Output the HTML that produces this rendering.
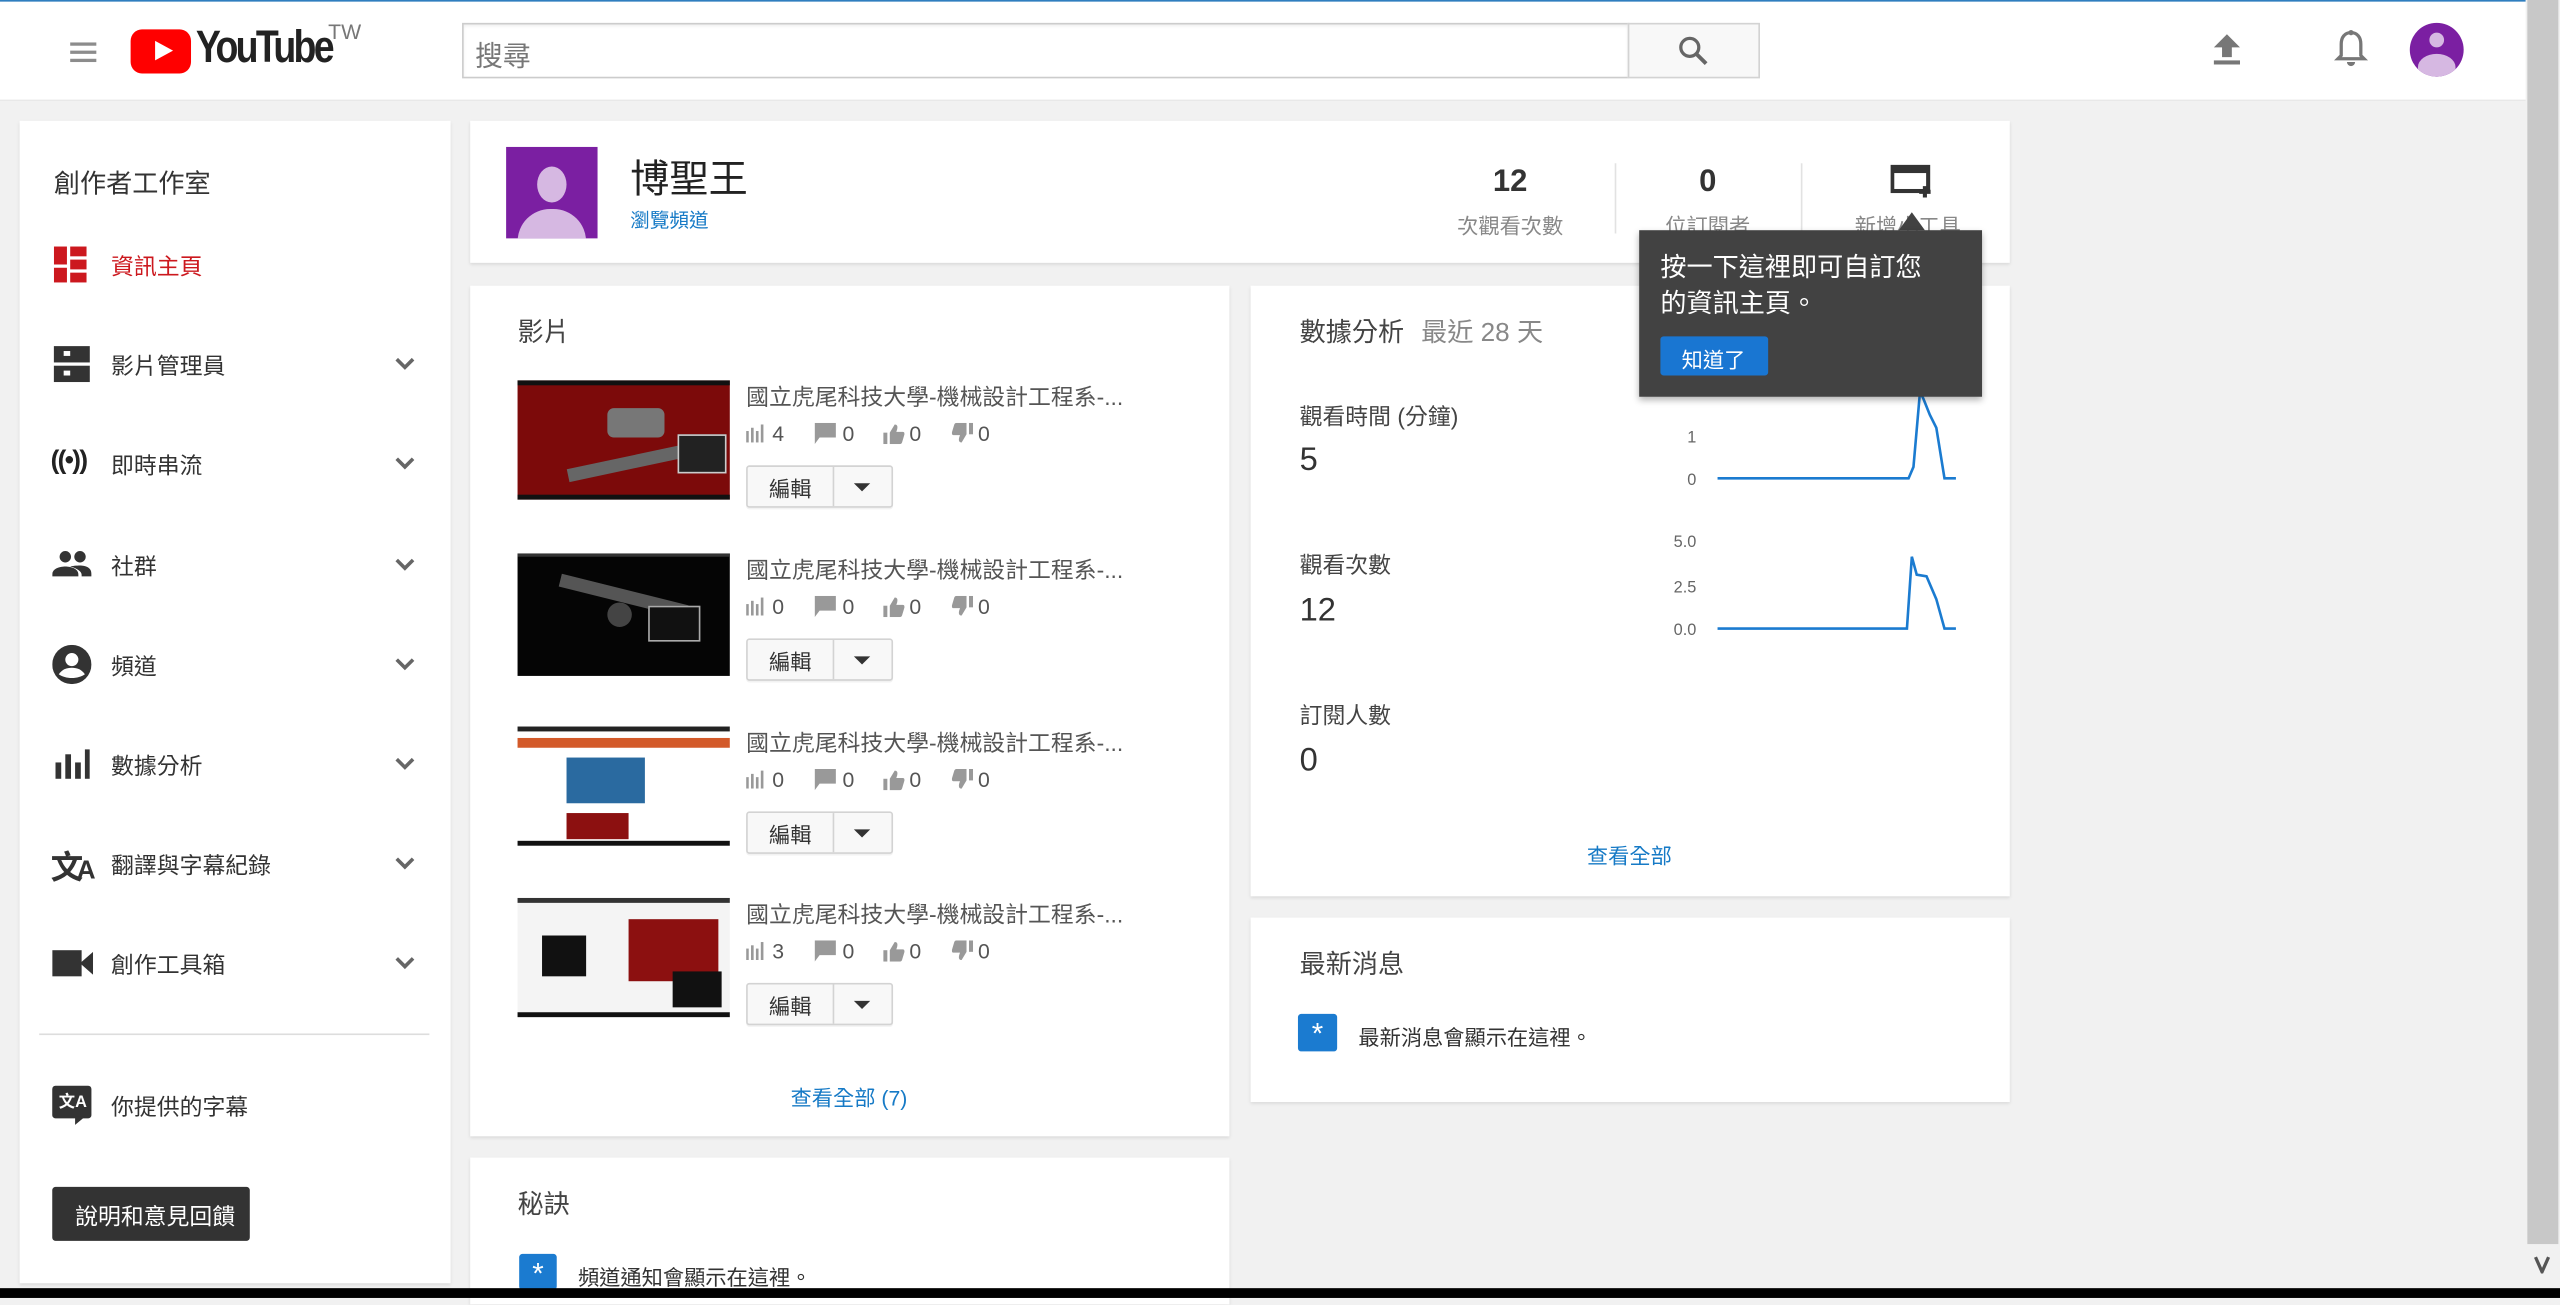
<!DOCTYPE html>
<html><head><meta charset="utf-8">
<style>
html,body{margin:0;padding:0;width:2560px;height:1297px;overflow:hidden;background:#f1f1f1}
#s{position:absolute;left:0;top:0;width:1568px;height:795px;transform:scale(1.63265);transform-origin:0 0;background:#f1f1f1;font-family:"Liberation Sans","Noto Sans CJK TC",sans-serif;color:#333}
.a{position:absolute}
.card{position:absolute;background:#fff;box-shadow:0 1px 2px rgba(0,0,0,.1)}
.t{position:absolute;white-space:nowrap}
.nav{font-size:14px;color:#333}
.chev{position:absolute;left:242px;width:12px;height:12px}
.vt{font-size:14px;color:#555}
.stats{position:absolute;left:457px;width:160px;height:16px;font-size:13px;color:#555}
.stats svg{position:absolute;top:1px}
.stats span{position:absolute;top:0}
.btn{position:absolute;width:88px;height:24px;border:1px solid #d3d3d3;border-radius:2px;background:#f8f8f8;box-shadow:0 1px 0 rgba(0,0,0,.05)}
.btn span{position:absolute;left:13px;top:3px;font-size:13px;color:#333}
.btn i{position:absolute;left:52px;top:0;width:1px;height:24px;background:#d3d3d3}
.btn b{position:absolute;left:65px;top:10px;width:0;height:0;border-left:5px solid transparent;border-right:5px solid transparent;border-top:5px solid #333}
</style></head><body><div id="s">
<!-- header -->
<div class="a" style="left:0;top:0;width:1547px;height:61px;background:#fff;border-bottom:1px solid #e8e8e8"></div>
<div class="a" style="left:0;top:0;width:1547px;height:1px;background:#2f7ebf"></div>
<div class="a" style="left:43px;top:26px;width:16px;height:2px;background:#8c8c8c;box-shadow:0 5px 0 #8c8c8c,0 10px 0 #8c8c8c"></div>
<div class="a" style="left:80px;top:18px;width:37px;height:27px;background:#f00;border-radius:7px"></div>
<div class="a" style="left:95px;top:25px;width:0;height:0;border-top:6.5px solid transparent;border-bottom:6.5px solid transparent;border-left:11px solid #fff"></div>
<div class="t" style="left:120px;top:13px;font-size:28px;font-weight:bold;letter-spacing:-2px;color:#222;transform:scaleX(.82);transform-origin:0 0">YouTube</div>
<div class="t" style="left:201px;top:12px;font-size:13px;color:#777">TW</div>
<div class="a" style="left:283px;top:14px;width:713px;height:32px;border:1px solid #ccc;background:#fff;box-shadow:inset 0 1px 2px #eee"></div>
<div class="t" style="left:291px;top:20px;font-size:17px;color:#777">搜尋</div>
<div class="a" style="left:997px;top:14px;width:79px;height:32px;border:1px solid #d3d3d3;background:#f8f8f8"></div>
<svg class="a" style="left:1027px;top:21px" width="20" height="20" viewBox="0 0 20 20"><circle cx="8" cy="8" r="5.5" fill="none" stroke="#666" stroke-width="2"/><path d="M12 12l6 6" stroke="#666" stroke-width="2.4"/></svg>
<svg class="a" style="left:1353px;top:19px" width="22" height="22" viewBox="0 0 22 22"><path d="M11 2l-8 8h5v6h6v-6h5z" fill="#777"/><rect x="3" y="18" width="16" height="2.5" fill="#777"/></svg>
<svg class="a" style="left:1428px;top:17px" width="24" height="26" viewBox="0 0 24 26"><path d="M12 3c-4 0-6 3-6 7v7l-2 2h16l-2-2v-7c0-4-2-7-6-7z" fill="none" stroke="#777" stroke-width="2"/><circle cx="12" cy="3" r="1.6" fill="#777"/><path d="M9.5 21a2.5 2.5 0 0 0 5 0z" fill="#777"/></svg>
<div class="a" style="left:1476px;top:14px;width:33px;height:33px;border-radius:50%;background:#7b1fa2;overflow:hidden"><div class="a" style="left:12px;top:6px;width:9px;height:9px;border-radius:50%;background:#d6b8e2"></div><div class="a" style="left:5px;top:19px;width:23px;height:16px;border-radius:50% 50% 0 0;background:#d6b8e2"></div></div>
<!-- scrollbar -->
<div class="a" style="left:1547px;top:0;width:21px;height:790px;background:#f1f1f1"></div>
<div class="a" style="left:1548px;top:0;width:19px;height:762px;background:#c8c8c8"></div>
<svg class="a" style="left:1551px;top:768px" width="12" height="12" viewBox="0 0 12 12"><path d="M2 2l4 9 4-9" fill="none" stroke="#555" stroke-width="2"/></svg>

<!-- sidebar -->
<div class="card" style="left:12px;top:74px;width:264px;height:712px"></div>
<div class="t" style="left:33px;top:99px;font-size:16px;color:#333">創作者工作室</div>
<svg class="a" style="left:33px;top:151px" width="22" height="22" viewBox="0 0 22 22" fill="#cc181e"><rect x="0" y="0" width="8" height="11"/><rect x="10" y="0" width="10" height="6"/><rect x="10" y="8" width="10" height="6"/><rect x="0" y="13" width="8" height="9"/><rect x="10" y="16" width="10" height="6"/></svg>
<div class="t nav" style="left:68px;top:153px;color:#cc181e">資訊主頁</div>
<svg class="a" style="left:32px;top:211px" width="24" height="24" viewBox="0 0 24 24" fill="#333"><rect x="1" y="1" width="22" height="10"/><rect x="1" y="13" width="22" height="10"/><rect x="7" y="4" width="4" height="3" fill="#fff"/><rect x="7" y="16" width="4" height="3" fill="#fff"/></svg>
<div class="t nav" style="left:68px;top:214px">影片管理員</div>
<div class="t nav" style="left:31px;top:274px;font-size:16px;font-weight:bold;letter-spacing:-1px;color:#222">((•))</div>
<div class="t nav" style="left:68px;top:275px">即時串流</div>
<svg class="a" style="left:32px;top:336px" width="24" height="20" viewBox="0 0 24 20" fill="#333"><circle cx="8" cy="5" r="3.5"/><circle cx="17" cy="5" r="3.5"/><path d="M0 16c0-4 5-5 8-5s8 1 8 5v1H0z"/><path d="M11 11c1-.3 4-.6 6-.6 3 0 7 1 7 5v1.6h-6v-1c0-2-3-4-7-5z"/></svg>
<div class="t nav" style="left:68px;top:337px">社群</div>
<svg class="a" style="left:32px;top:395px" width="24" height="24" viewBox="0 0 24 24"><circle cx="12" cy="12" r="12" fill="#333"/><circle cx="12" cy="9" r="4" fill="#fff"/><path d="M4 18c2-3 5-4 8-4s6 1 8 4c-2 1.5-5 2.3-8 2.3S6 19.5 4 18z" fill="#fff"/></svg>
<div class="t nav" style="left:68px;top:398px">頻道</div>
<svg class="a" style="left:33px;top:458px" width="22" height="20" viewBox="0 0 22 20" fill="#333"><rect x="1" y="9" width="3.5" height="10"/><rect x="7" y="4" width="3.5" height="15"/><rect x="13" y="9" width="3.5" height="10"/><rect x="19" y="1" width="3" height="18"/></svg>
<div class="t nav" style="left:68px;top:459px">數據分析</div>
<div class="t" style="left:31px;top:515px;font-size:20px;font-weight:bold;color:#333;letter-spacing:-4px">文<span style="font-size:16px">A</span></div>
<div class="t nav" style="left:68px;top:520px">翻譯與字幕紀錄</div>
<svg class="a" style="left:32px;top:581px" width="25" height="18" viewBox="0 0 25 18" fill="#333"><rect x="0" y="1" width="18" height="16"/><path d="M17 9l8-7v14z"/></svg>
<div class="t nav" style="left:68px;top:581px">創作工具箱</div>
<svg class="chev" style="top:217px" viewBox="0 0 12 12"><path d="M1 3l5 5 5-5" fill="none" stroke="#666" stroke-width="2.2"/></svg>
<svg class="chev" style="top:278px" viewBox="0 0 12 12"><path d="M1 3l5 5 5-5" fill="none" stroke="#666" stroke-width="2.2"/></svg>
<svg class="chev" style="top:340px" viewBox="0 0 12 12"><path d="M1 3l5 5 5-5" fill="none" stroke="#666" stroke-width="2.2"/></svg>
<svg class="chev" style="top:401px" viewBox="0 0 12 12"><path d="M1 3l5 5 5-5" fill="none" stroke="#666" stroke-width="2.2"/></svg>
<svg class="chev" style="top:462px" viewBox="0 0 12 12"><path d="M1 3l5 5 5-5" fill="none" stroke="#666" stroke-width="2.2"/></svg>
<svg class="chev" style="top:523px" viewBox="0 0 12 12"><path d="M1 3l5 5 5-5" fill="none" stroke="#666" stroke-width="2.2"/></svg>
<svg class="chev" style="top:584px" viewBox="0 0 12 12"><path d="M1 3l5 5 5-5" fill="none" stroke="#666" stroke-width="2.2"/></svg>
<div class="a" style="left:24px;top:633px;width:239px;height:1px;background:#ddd"></div>
<div class="a" style="left:32px;top:665px;width:24px;height:20px;background:#333;border-radius:2px"></div>
<div class="a" style="left:46px;top:684px;width:0;height:0;border-left:6px solid #333;border-bottom:5px solid transparent"></div>
<div class="t" style="left:36px;top:666px;font-size:10px;color:#fff;font-weight:bold">文A</div>
<div class="t nav" style="left:68px;top:668px">你提供的字幕</div>
<div class="a" style="left:32px;top:727px;width:121px;height:33px;background:#333;border-radius:2px"></div>
<div class="t" style="left:46px;top:735px;font-size:14px;color:#fff">說明和意見回饋</div>

<!-- channel header -->
<div class="card" style="left:288px;top:74px;width:943px;height:87px"></div>
<div class="a" style="left:310px;top:90px;width:56px;height:56px;background:#7b1fa2;overflow:hidden"><div class="a" style="left:19px;top:12px;width:18px;height:22px;border-radius:50%;background:#d6b8e2"></div><div class="a" style="left:7px;top:38px;width:42px;height:24px;border-radius:20px 20px 0 0;background:#d6b8e2"></div></div>
<div class="t" style="left:386px;top:90px;font-size:24px;color:#222">博聖王</div>
<div class="t" style="left:386px;top:126px;font-size:12px;color:#167ac6">瀏覽頻道</div>
<div class="t" style="left:890px;top:101px;width:70px;text-align:center;font-size:19px;font-weight:bold;color:#333">12</div>
<div class="t" style="left:885px;top:128px;width:80px;text-align:center;font-size:13px;color:#888">次觀看次數</div>
<div class="a" style="left:989px;top:100px;width:1px;height:43px;background:#e2e2e2"></div>
<div class="t" style="left:1016px;top:101px;width:60px;text-align:center;font-size:19px;font-weight:bold;color:#333">0</div>
<div class="t" style="left:1011px;top:128px;width:70px;text-align:center;font-size:13px;color:#888">位訂閱者</div>
<div class="a" style="left:1103px;top:100px;width:1px;height:43px;background:#e2e2e2"></div>
<svg class="a" style="left:1158px;top:101px" width="26" height="20" viewBox="0 0 26 20"><rect x="1" y="1" width="22" height="15" fill="none" stroke="#333" stroke-width="2.5"/><rect x="1" y="1" width="22" height="4" fill="#333"/><path d="M21 13v7M17.5 16.5h7" stroke="#333" stroke-width="2.5"/></svg>
<div class="t" style="left:1136px;top:128px;font-size:13px;color:#888">新增小工具</div>

<!-- videos card -->
<div class="card" style="left:288px;top:175px;width:465px;height:521px"></div>
<div class="t" style="left:317px;top:190px;font-size:16px;color:#444">影片</div>

<div class="a" style="left:317px;top:233px;width:130px;height:73px;background:#7c0a0a;border-top:3px solid #111;border-bottom:3px solid #111;box-sizing:border-box"><div class="a" style="left:55px;top:14px;width:35px;height:18px;background:#777;border-radius:4px"></div><div class="a" style="left:30px;top:42px;width:90px;height:8px;background:#666;transform:rotate(-12deg)"></div><div class="a" style="left:98px;top:30px;width:28px;height:22px;background:#222;border:1px solid #ccc"></div></div>
<div class="t vt" style="left:457px;top:233px">國立虎尾科技大學-機械設計工程系-...</div>
<div class="stats" style="top:258px"><svg style="left:0" width="11" height="12" viewBox="0 0 11 12" fill="#999"><rect x="0" y="5" width="1.6" height="7"/><rect x="3" y="3" width="1.6" height="9"/><rect x="6" y="5" width="1.6" height="7"/><rect x="9" y="1" width="1.6" height="11"/></svg><span style="left:16px">4</span><svg style="left:42px" width="13" height="14" viewBox="0 0 13 14" fill="#999"><path d="M0 0h13v9H3l-3 4z"/></svg><span style="left:59px">0</span><svg style="left:84px" width="13" height="13" viewBox="0 0 13 13" fill="#999"><rect x="0" y="6" width="2.5" height="7"/><path d="M4 6l3-5c1.5 0 2 1 1.5 3L8 5.5h4c1 0 1 1 1 1.5l-1.5 5c-.3.7-.8 1-1.5 1H4z"/></svg><span style="left:100px">0</span><svg style="left:126px" width="13" height="13" viewBox="0 0 13 13" fill="#999"><rect x="10.5" y="0" width="2.5" height="7"/><path d="M9 7l-3 5c-1.5 0-2-1-1.5-3L5 7.5H1c-1 0-1-1-1-1.5l1.5-5C1.8.3 2.3 0 3 0h6z"/></svg><span style="left:142px">0</span></div>
<div class="btn" style="left:457px;top:285px"><span>編輯</span><i></i><b></b></div>

<div class="a" style="left:317px;top:339px;width:130px;height:73px;background:#050505;border-top:2px solid #333"><div class="a" style="left:25px;top:20px;width:80px;height:8px;background:#555;transform:rotate(14deg)"></div><div class="a" style="left:55px;top:28px;width:15px;height:15px;border-radius:50%;background:#444"></div><div class="a" style="left:80px;top:30px;width:30px;height:20px;border:1px solid #aaa;background:#111"></div></div>
<div class="t vt" style="left:457px;top:339px">國立虎尾科技大學-機械設計工程系-...</div>
<div class="stats" style="top:364px"><svg style="left:0" width="11" height="12" viewBox="0 0 11 12" fill="#999"><rect x="0" y="5" width="1.6" height="7"/><rect x="3" y="3" width="1.6" height="9"/><rect x="6" y="5" width="1.6" height="7"/><rect x="9" y="1" width="1.6" height="11"/></svg><span style="left:16px">0</span><svg style="left:42px" width="13" height="14" viewBox="0 0 13 14" fill="#999"><path d="M0 0h13v9H3l-3 4z"/></svg><span style="left:59px">0</span><svg style="left:84px" width="13" height="13" viewBox="0 0 13 13" fill="#999"><rect x="0" y="6" width="2.5" height="7"/><path d="M4 6l3-5c1.5 0 2 1 1.5 3L8 5.5h4c1 0 1 1 1 1.5l-1.5 5c-.3.7-.8 1-1.5 1H4z"/></svg><span style="left:100px">0</span><svg style="left:126px" width="13" height="13" viewBox="0 0 13 13" fill="#999"><rect x="10.5" y="0" width="2.5" height="7"/><path d="M9 7l-3 5c-1.5 0-2-1-1.5-3L5 7.5H1c-1 0-1-1-1-1.5l1.5-5C1.8.3 2.3 0 3 0h6z"/></svg><span style="left:142px">0</span></div>
<div class="btn" style="left:457px;top:391px"><span>編輯</span><i></i><b></b></div>

<div class="a" style="left:317px;top:445px;width:130px;height:73px;background:#fff;border-top:3px solid #222;border-bottom:3px solid #111;box-sizing:border-box"><div class="a" style="left:0;top:4px;width:130px;height:6px;background:#d35a2a"></div><div class="a" style="left:30px;top:16px;width:48px;height:28px;background:#2a6aa0"></div><div class="a" style="left:30px;top:50px;width:38px;height:16px;background:#8c1010"></div></div>
<div class="t vt" style="left:457px;top:445px">國立虎尾科技大學-機械設計工程系-...</div>
<div class="stats" style="top:470px"><svg style="left:0" width="11" height="12" viewBox="0 0 11 12" fill="#999"><rect x="0" y="5" width="1.6" height="7"/><rect x="3" y="3" width="1.6" height="9"/><rect x="6" y="5" width="1.6" height="7"/><rect x="9" y="1" width="1.6" height="11"/></svg><span style="left:16px">0</span><svg style="left:42px" width="13" height="14" viewBox="0 0 13 14" fill="#999"><path d="M0 0h13v9H3l-3 4z"/></svg><span style="left:59px">0</span><svg style="left:84px" width="13" height="13" viewBox="0 0 13 13" fill="#999"><rect x="0" y="6" width="2.5" height="7"/><path d="M4 6l3-5c1.5 0 2 1 1.5 3L8 5.5h4c1 0 1 1 1 1.5l-1.5 5c-.3.7-.8 1-1.5 1H4z"/></svg><span style="left:100px">0</span><svg style="left:126px" width="13" height="13" viewBox="0 0 13 13" fill="#999"><rect x="10.5" y="0" width="2.5" height="7"/><path d="M9 7l-3 5c-1.5 0-2-1-1.5-3L5 7.5H1c-1 0-1-1-1-1.5l1.5-5C1.8.3 2.3 0 3 0h6z"/></svg><span style="left:142px">0</span></div>
<div class="btn" style="left:457px;top:497px"><span>編輯</span><i></i><b></b></div>

<div class="a" style="left:317px;top:550px;width:130px;height:73px;background:#f4f4f4;border-top:3px solid #333;border-bottom:3px solid #111;box-sizing:border-box"><div class="a" style="left:68px;top:10px;width:55px;height:38px;background:#8c1010"></div><div class="a" style="left:15px;top:20px;width:27px;height:25px;background:#111"></div><div class="a" style="left:95px;top:42px;width:30px;height:22px;background:#111"></div></div>
<div class="t vt" style="left:457px;top:550px">國立虎尾科技大學-機械設計工程系-...</div>
<div class="stats" style="top:575px"><svg style="left:0" width="11" height="12" viewBox="0 0 11 12" fill="#999"><rect x="0" y="5" width="1.6" height="7"/><rect x="3" y="3" width="1.6" height="9"/><rect x="6" y="5" width="1.6" height="7"/><rect x="9" y="1" width="1.6" height="11"/></svg><span style="left:16px">3</span><svg style="left:42px" width="13" height="14" viewBox="0 0 13 14" fill="#999"><path d="M0 0h13v9H3l-3 4z"/></svg><span style="left:59px">0</span><svg style="left:84px" width="13" height="13" viewBox="0 0 13 13" fill="#999"><rect x="0" y="6" width="2.5" height="7"/><path d="M4 6l3-5c1.5 0 2 1 1.5 3L8 5.5h4c1 0 1 1 1 1.5l-1.5 5c-.3.7-.8 1-1.5 1H4z"/></svg><span style="left:100px">0</span><svg style="left:126px" width="13" height="13" viewBox="0 0 13 13" fill="#999"><rect x="10.5" y="0" width="2.5" height="7"/><path d="M9 7l-3 5c-1.5 0-2-1-1.5-3L5 7.5H1c-1 0-1-1-1-1.5l1.5-5C1.8.3 2.3 0 3 0h6z"/></svg><span style="left:142px">0</span></div>
<div class="btn" style="left:457px;top:602px"><span>編輯</span><i></i><b></b></div>

<div class="t" style="left:420px;top:662px;width:200px;text-align:center;font-size:13px;color:#167ac6">查看全部 (7)</div>

<!-- tips -->
<div class="card" style="left:288px;top:709px;width:465px;height:90px"></div>
<div class="t" style="left:317px;top:724px;font-size:16px;color:#444">秘訣</div>
<div class="a" style="left:318px;top:768px;width:23px;height:22px;background:#1b7bd0;border-radius:2px;color:#fff;font-size:18px;text-align:center;line-height:24px">*</div>
<div class="t" style="left:354px;top:772px;font-size:13px;color:#333">頻道通知會顯示在這裡。</div>

<!-- analytics -->
<div class="card" style="left:766px;top:175px;width:465px;height:374px"></div>
<div class="t" style="left:796px;top:190px;font-size:16px;color:#444">數據分析 <span style="color:#888;margin-left:6px">最近 28 天</span></div>
<div class="t" style="left:796px;top:245px;font-size:14px;color:#444">觀看時間 (分鐘)</div>
<div class="t" style="left:796px;top:271px;font-size:20px;color:#333">5</div>
<div class="t" style="left:796px;top:336px;font-size:14px;color:#444">觀看次數</div>
<div class="t" style="left:796px;top:363px;font-size:20px;color:#333">12</div>
<div class="t" style="left:796px;top:428px;font-size:14px;color:#444">訂閱人數</div>
<div class="t" style="left:796px;top:455px;font-size:20px;color:#333">0</div>
<div class="t" style="left:948px;top:514px;width:100px;text-align:center;font-size:13px;color:#167ac6">查看全部</div>
<svg class="a" style="left:1015px;top:230px" width="200" height="170" viewBox="1015 230 200 170" font-family="Liberation Sans" font-size="10" fill="#666">
<text x="1039" y="271" text-anchor="end">1</text><text x="1039" y="297" text-anchor="end">0</text>
<path d="M1052 293H1169L1172 286L1176 240L1178 244L1182 254L1186 262L1191 293H1198" fill="none" stroke="#1b7bd0" stroke-width="1.6"/>
<text x="1039" y="335" text-anchor="end">5.0</text><text x="1039" y="363" text-anchor="end">2.5</text><text x="1039" y="389" text-anchor="end">0.0</text>
<path d="M1052 385H1168L1171 341L1174 352L1180 353L1186 367L1191 385H1198" fill="none" stroke="#1b7bd0" stroke-width="1.6"/>
</svg>

<!-- news -->
<div class="card" style="left:766px;top:562px;width:465px;height:113px"></div>
<div class="t" style="left:796px;top:577px;font-size:16px;color:#444">最新消息</div>
<div class="a" style="left:795px;top:621px;width:24px;height:23px;background:#1b7bd0;border-radius:2px;color:#fff;font-size:18px;text-align:center;line-height:25px">*</div>
<div class="t" style="left:832px;top:625px;font-size:13px;color:#333">最新消息會顯示在這裡。</div>

<!-- tooltip -->
<div class="a" style="left:1163px;top:130px;width:0;height:0;border-left:8px solid transparent;border-right:8px solid transparent;border-bottom:11px solid #424242"></div>
<div class="a" style="left:1004px;top:141px;width:210px;height:102px;background:#424242;box-shadow:0 2px 4px rgba(0,0,0,.3)"></div>
<div class="t" style="left:1017px;top:154px;font-size:16px;line-height:22px;color:#fff">按一下這裡即可自訂您<br>的資訊主頁。</div>
<div class="a" style="left:1017px;top:206px;width:66px;height:24px;background:#1976d2;border-radius:2px"></div>
<div class="t" style="left:1030px;top:210px;font-size:13px;color:#fff">知道了</div>

<div class="a" style="left:0;top:789px;width:1568px;height:6px;background:#000"></div>
</div></body></html>
